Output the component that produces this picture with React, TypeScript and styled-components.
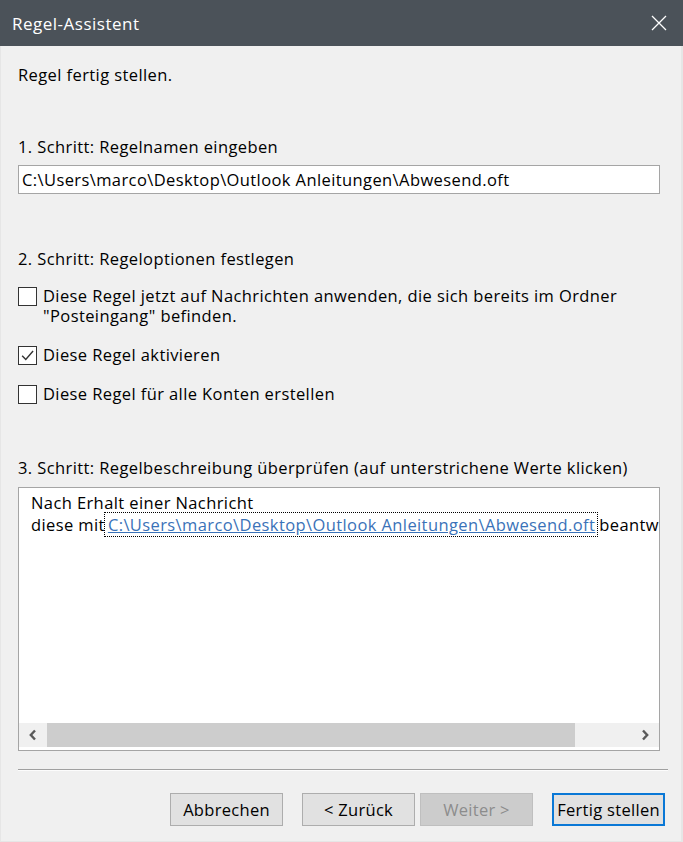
import React from "react";
import styled, { createGlobalStyle } from "styled-components";

const Global = createGlobalStyle`
  html, body { margin: 0; padding: 0; background: #f0f0f0; }
  * { box-sizing: border-box; }
  body { font-family: "Open Sans", "Noto Sans", sans-serif; }
`;

const Window = styled.div`
  width: 683px;
  height: 842px;
  display: flex;
  flex-direction: column;
  background: #f0f0f0;
  font-family: "Open Sans", "Noto Sans", sans-serif;
  font-size: 16.5px;
  letter-spacing: 0.4px;
  color: #000;
`;

const TitleBar = styled.div`
  height: 46px;
  flex: none;
  background: #4b5259;
  color: #fff;
  display: flex;
  align-items: center;
  justify-content: space-between;
  padding: 0 16px 0 12px;
  font-size: 17px;
  letter-spacing: 0.5px;
`;

const CloseButton = styled.div`
  width: 16px;
  height: 16px;
  display: flex;
  align-items: center;
  justify-content: center;
`;

const Body = styled.div`
  flex: 1;
  display: flex;
  flex-direction: column;
  padding: 0 16px 0 17px;
  border-left: 1px solid #e6e6e6;
  border-right: 2px solid #e6e6e6;
  border-bottom: 1px solid #e6e6e6;
`;

const Label = styled.div<{ $mt: number }>`
  margin-top: ${(p) => p.$mt}px;
  line-height: 20px;
  white-space: nowrap;
`;

const TextInput = styled.div`
  margin-top: 8px;
  width: 642px;
  height: 29px;
  background: #fff;
  border: 1px solid #a5a5a5;
  display: flex;
  align-items: center;
  padding-left: 3px;
  white-space: nowrap;
  overflow: hidden;
`;

const CheckRow = styled.div<{ $mt: number }>`
  margin-top: ${(p) => p.$mt}px;
  display: flex;
  align-items: flex-start;
  gap: 6px;
`;

const Box = styled.div`
  width: 19px;
  height: 19px;
  margin-top: 1px;
  flex: none;
  background: #fff;
  border: 1px solid #333;
  display: flex;
  align-items: center;
  justify-content: center;
`;

const CheckText = styled.div`
  display: flex;
  flex-direction: column;
`;

const CheckLine = styled.span`
  line-height: 20px;
  white-space: nowrap;
`;

const DescBox = styled.div`
  margin-top: 9px;
  width: 642px;
  height: 264px;
  background: #fff;
  border: 1px solid #a5a5a5;
  display: flex;
  flex-direction: column;
`;

const DescContent = styled.div`
  flex: 1;
  overflow: hidden;
  padding: 4px 0 0 12px;
  white-space: nowrap;
  line-height: 22px;
`;

const Link = styled.span`
  color: #3a72b8;
  text-decoration: underline;
  outline: 1px dotted #000;
  outline-offset: 0;
  padding: 0 2px 0 3px;
  margin: 0 2px 0 0;
`;

const HScroll = styled.div`
  height: 24px;
  margin-bottom: 3px;
  flex: none;
  display: flex;
  align-items: stretch;
  background: #f0f0f0;
`;

const Arrow = styled.div`
  width: 28px;
  flex: none;
  display: flex;
  align-items: center;
  justify-content: center;
`;

const Track = styled.div`
  flex: 1;
  display: flex;
`;

const Thumb = styled.div`
  width: 528px;
  background: #cdcdcd;
`;

const Separator = styled.div`
  margin-top: 18px;
  width: 650px;
  border-top: 1px solid #a0a0a0;
  border-bottom: 1px solid #fcfcfc;
`;

const ButtonRow = styled.div`
  margin-top: 22px;
  display: flex;
  justify-content: flex-end;
`;

const Button = styled.div<{ $variant?: "default" | "disabled" | "primary"; $ml: number }>`
  width: 113px;
  height: 33px;
  margin-left: ${(p) => p.$ml}px;
  display: flex;
  align-items: center;
  justify-content: center;
  white-space: nowrap;
  letter-spacing: 0.3px;
  background: ${(p) => (p.$variant === "disabled" ? "#cccccc" : "#e1e1e1")};
  color: ${(p) => (p.$variant === "disabled" ? "#8c8c8c" : "#000")};
  border: ${(p) =>
    p.$variant === "primary"
      ? "2px solid #0a78d6"
      : p.$variant === "disabled"
      ? "1px solid #bfbfbf"
      : "1px solid #adadad"};
`;

const Chevron = ({ dir }: { dir: "left" | "right" }) => (
  <svg width="10" height="12" viewBox="0 0 10 12">
    <path
      d={dir === "left" ? "M7 1.5 L2.8 6 L7 10.5" : "M3 1.5 L7.2 6 L3 10.5"}
      fill="none"
      stroke="#5a5a5a"
      strokeWidth="2.4"
    />
  </svg>
);

const Check = () => (
  <svg width="15" height="15" viewBox="0 0 14 14">
    <path d="M2 7.2 L5.4 10.8 L12.2 2.8" fill="none" stroke="#333" strokeWidth="1.3" />
  </svg>
);

export default function App() {
  const path = "C:\\Users\\marco\\Desktop\\Outlook Anleitungen\\Abwesend.oft";
  return (
    <Window>
      <Global />
      <TitleBar>
        <span>Regel-Assistent</span>
        <CloseButton>
          <svg width="16" height="16" viewBox="0 0 16 16">
            <path d="M1 1 L15 15 M15 1 L1 15" stroke="#fff" strokeWidth="1.3" />
          </svg>
        </CloseButton>
      </TitleBar>
      <Body>
        <Label $mt={19}>Regel fertig stellen.</Label>
        <Label $mt={52}>1. Schritt: Regelnamen eingeben</Label>
        <TextInput>{path}</TextInput>
        <Label $mt={55}>2. Schritt: Regeloptionen festlegen</Label>
        <CheckRow $mt={17}>
          <Box />
          <CheckText>
            <CheckLine>Diese Regel jetzt auf Nachrichten anwenden, die sich bereits im Ordner</CheckLine>
            <CheckLine>"Posteingang" befinden.</CheckLine>
          </CheckText>
        </CheckRow>
        <CheckRow $mt={19}>
          <Box>
            <Check />
          </Box>
          <CheckText>
            <CheckLine>Diese Regel aktivieren</CheckLine>
          </CheckText>
        </CheckRow>
        <CheckRow $mt={19}>
          <Box />
          <CheckText>
            <CheckLine>Diese Regel für alle Konten erstellen</CheckLine>
          </CheckText>
        </CheckRow>
        <Label $mt={54}>3. Schritt: Regelbeschreibung überprüfen (auf unterstrichene Werte klicken)</Label>
        <DescBox>
          <DescContent>
            Nach Erhalt einer Nachricht
            <br />
            diese mit<Link>{path}</Link>beantworten
          </DescContent>
          <HScroll>
            <Arrow>
              <Chevron dir="left" />
            </Arrow>
            <Track>
              <Thumb />
            </Track>
            <Arrow>
              <Chevron dir="right" />
            </Arrow>
          </HScroll>
        </DescBox>
        <Separator />
        <ButtonRow>
          <Button $ml={0}>Abbrechen</Button>
          <Button $ml={19}>&lt; Zurück</Button>
          <Button $ml={5} $variant="disabled">Weiter &gt;</Button>
          <Button $ml={19} $variant="primary">Fertig stellen</Button>
        </ButtonRow>
      </Body>
    </Window>
  );
}
